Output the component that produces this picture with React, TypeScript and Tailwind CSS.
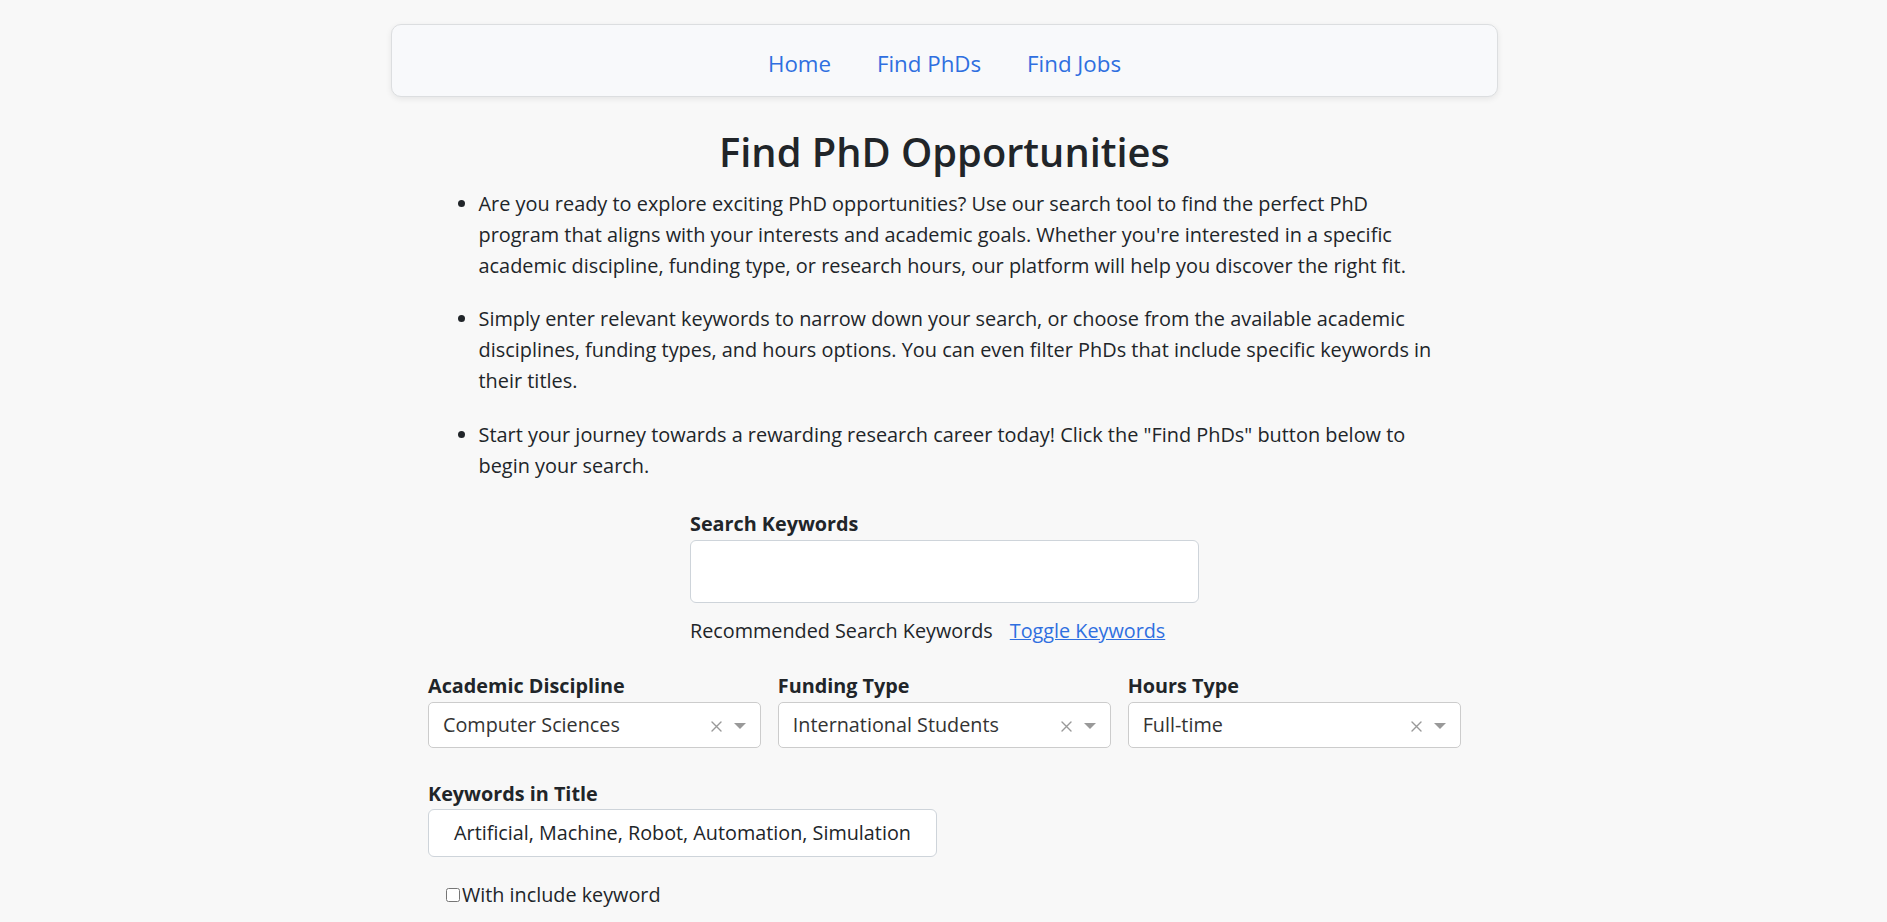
import React from "react";

const navLinks = ["Home", "Find PhDs", "Find Jobs"];

const intro = [
  "Are you ready to explore exciting PhD opportunities? Use our search tool to find the perfect PhD program that aligns with your interests and academic goals. Whether you're interested in a specific academic discipline, funding type, or research hours, our platform will help you discover the right fit.",
  "Simply enter relevant keywords to narrow down your search, or choose from the available academic disciplines, funding types, and hours options. You can even filter PhDs that include specific keywords in their titles.",
  'Start your journey towards a rewarding research career today! Click the "Find PhDs" button below to begin your search.',
];

const filters = [
  { label: "Academic Discipline", value: "Computer Sciences" },
  { label: "Funding Type", value: "International Students" },
  { label: "Hours Type", value: "Full-time" },
];

function ClearIcon() {
  return (
    <svg width="11" height="11" viewBox="0 0 11 11" fill="none">
      <path d="M1 1L10 10M10 1L1 10" stroke="#999" strokeWidth="1.4" strokeLinecap="round" />
    </svg>
  );
}

function CaretIcon() {
  return (
    <svg width="12" height="6" viewBox="0 0 12 6">
      <path d="M0 0H12L6 6Z" fill="#999" />
    </svg>
  );
}

function SelectBox({ label, value }: { label: string; value: string }) {
  return (
    <div>
      <label className="block font-bold leading-[31px] mb-px">{label}</label>
      <div className="h-[46px] flex items-center bg-white border border-[#ccc] rounded-[5px] pl-[14px] pr-[14px]">
        <span className="flex-1 text-[#333]">{value}</span>
        <div className="flex items-center gap-[12px] pt-[3px]">
          <ClearIcon />
          <CaretIcon />
        </div>
      </div>
    </div>
  );
}

export default function App() {
  return (
    <div className="min-h-screen bg-[#f8f8f8] pt-[24px] pl-[2px] pb-10 font-['Open_Sans',sans-serif] text-[19.8px] text-[#212529]">
      <nav className="mx-auto w-[1107px] h-[73px] pt-[6px] flex items-center justify-center gap-[46px] bg-[#f8f9fb] border border-[#dcdee0] rounded-[10px] shadow-[0_2px_6px_rgba(0,0,0,0.08)]">
        {navLinks.map((link) => (
          <a key={link} href="#" className="text-[22.3px] leading-[33px] text-[#2f6fe0]">
            {link}
          </a>
        ))}
      </nav>

      <h1 className="mt-[31px] text-center text-[39.8px] leading-[1.2] font-semibold">
        Find PhD Opportunities
      </h1>

      <ul className="mx-auto mt-[12px] w-[996px] pl-[32px] list-disc text-[19.9px]">
        {intro.map((text, i) => (
          <li key={i} className={`leading-[31px] ${i < intro.length - 1 ? "mb-[22.5px]" : ""}`}>
            {text}
          </li>
        ))}
      </ul>

      <div className="mx-auto mt-[27.5px] w-[509px]">
        <label className="block font-bold leading-[31px] mb-px">Search Keywords</label>
        <input
          type="text"
          className="block w-full h-[63px] bg-white border border-[#ced4da] rounded-[6px] px-3 outline-none"
        />
        <div className="mt-[11.5px] leading-[31px]">
          Recommended Search Keywords
          <a href="#" className="ml-[17px] underline text-[#2f6fe0]">
            Toggle Keywords
          </a>
        </div>
      </div>

      <div className="mx-auto mt-[24px] w-[1033px]">
        <div className="grid grid-cols-3 gap-x-[16.5px]">
          {filters.map((f) => (
            <SelectBox key={f.label} label={f.label} value={f.value} />
          ))}
        </div>

        <label className="block mt-[31px] font-bold leading-[30px]">Keywords in Title</label>
        <input
          type="text"
          readOnly
          value="Artificial, Machine, Robot, Automation, Simulation"
          className="block w-[509px] h-[48px] bg-white border border-[#ced4da] rounded-[6px] text-center text-[#212529] outline-none"
        />

        <div className="mt-[22.5px] pl-[18px] leading-[31px]">
          <input type="checkbox" className="w-[14px] h-[14px] mr-[2px]" />
          With include keyword
        </div>
      </div>
    </div>
  );
}
